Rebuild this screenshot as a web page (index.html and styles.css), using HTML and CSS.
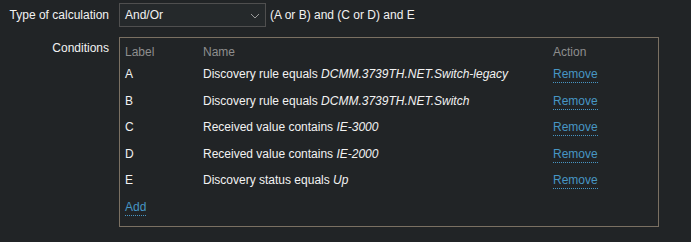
FILE: index.html
```html
<!DOCTYPE html>
<html lang="en">
<head>
    <meta charset="UTF-8">
    <title>Discovery conditions</title>
    <link rel="stylesheet" href="styles.css">
</head>
<body>
    <div class="form">
        <div class="form-row">
            <label class="form-label">Type of calculation</label>
            <div class="form-field calc-field">
                <div class="select">
                    <span>And/Or</span>
                    <svg class="chevron" width="10" height="6" viewBox="0 0 10 6">
                        <path d="M1 1 L5 5 L9 1" fill="none" stroke="#9a9a9a" stroke-width="1"/>
                    </svg>
                </div>
                <span class="formula">(A or B) and (C or D) and E</span>
            </div>
        </div>

        <div class="form-row">
            <label class="form-label conditions-label">Conditions</label>
            <div class="form-field">
                <div class="conditions">
                    <div class="cond-row cond-head">
                        <div class="c-label">Label</div>
                        <div class="c-name">Name</div>
                        <div class="c-action">Action</div>
                    </div>
                    <div class="cond-row">
                        <div class="c-label">A</div>
                        <div class="c-name">Discovery rule equals <em>DCMM.3739TH.NET.Switch-legacy</em></div>
                        <div class="c-action"><a class="link">Remove</a></div>
                    </div>
                    <div class="cond-row">
                        <div class="c-label">B</div>
                        <div class="c-name">Discovery rule equals <em>DCMM.3739TH.NET.Switch</em></div>
                        <div class="c-action"><a class="link">Remove</a></div>
                    </div>
                    <div class="cond-row">
                        <div class="c-label">C</div>
                        <div class="c-name">Received value contains <em>IE-3000</em></div>
                        <div class="c-action"><a class="link">Remove</a></div>
                    </div>
                    <div class="cond-row">
                        <div class="c-label">D</div>
                        <div class="c-name">Received value contains <em>IE-2000</em></div>
                        <div class="c-action"><a class="link">Remove</a></div>
                    </div>
                    <div class="cond-row">
                        <div class="c-label">E</div>
                        <div class="c-name">Discovery status equals <em>Up</em></div>
                        <div class="c-action"><a class="link">Remove</a></div>
                    </div>
                    <div class="cond-row">
                        <div class="c-label"><a class="link">Add</a></div>
                    </div>
                </div>
            </div>
        </div>
    </div>
</body>
</html>
```

FILE: styles.css
```css
body {
    margin: 0;
    background: #212426;
    color: #f2f2f2;
    font-family: Arial, "Liberation Sans", sans-serif;
    font-size: 12px;
    line-height: 14px;
}

.form {
    padding-top: 3px;
    display: flex;
    flex-direction: column;
    gap: 10px;
}

.form-row {
    display: flex;
    gap: 10px;
}

.form-label {
    width: 109px;
    flex-shrink: 0;
    text-align: right;
    padding-top: 5px;
    color: #f2f2f2;
}

.conditions-label {
    padding-top: 4px;
}

.calc-field {
    display: flex;
    align-items: center;
    gap: 4px;
}

.select {
    box-sizing: border-box;
    width: 147px;
    height: 24px;
    border: 1px solid #4f4f4f;
    background: #25292b;
    display: flex;
    align-items: center;
    justify-content: space-between;
    padding: 0 5px 0 5px;
}

.chevron {
    margin-top: 1px;
}

.conditions {
    box-sizing: border-box;
    width: 540px;
    border: 1px solid #7a7062;
    padding: 5px 5px 4px 5px;
}

.cond-row {
    display: flex;
    height: 26.6px;
    align-items: flex-start;
    padding-top: 5px;
    box-sizing: border-box;
}

.cond-head {
    height: 19px;
    padding-top: 2px;
    color: #8e8e8e;
}

.c-label {
    width: 78px;
}

.c-name {
    width: 350px;
}

.link {
    color: #4796c4;
    border-bottom: 1px dotted #4796c4;
    padding-bottom: 1px;
    cursor: pointer;
}
```
